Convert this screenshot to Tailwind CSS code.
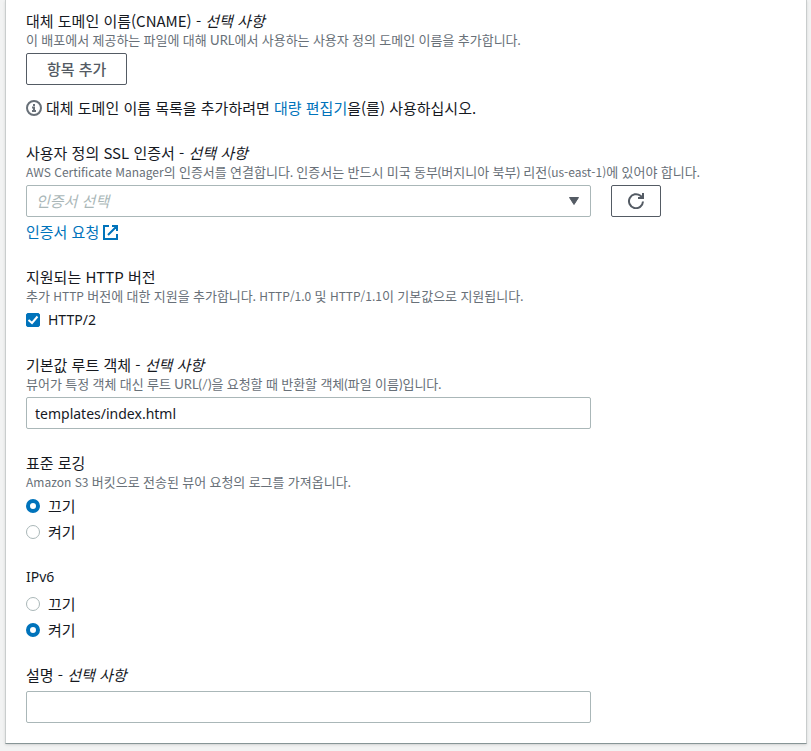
<!DOCTYPE html>
<html lang="ko">
<head>
  <meta charset="UTF-8" />
  <meta name="viewport" content="width=device-width, initial-scale=1.0" />
  <title>배포 설정</title>
  <script src="https://cdn.jsdelivr.net/npm/@tailwindcss/browser@4"></script>
</head>
<body class="bg-[#f2f3f3] text-[#16191f] font-['Noto_Sans_CJK_KR',sans-serif] text-[15px] leading-[22px]">
  <main class="ml-[5px] mr-1 mb-[7px] bg-white border-x border-b border-x-[#c9cdcd] border-b-[#879596] shadow-sm px-5 pt-[10px] pb-5">
    <form class="flex flex-col gap-[23px]">

      <!-- 대체 도메인 이름 -->
      <section>
        <h3>대체 도메인 이름(CNAME) - <i>선택 사항</i></h3>
        <p class="font-['Lato','Noto_Sans_CJK_KR',sans-serif] text-[13px] leading-4 text-[#687078]">이 배포에서 제공하는 파일에 대해 URL에서 사용하는 사용자 정의 도메인 이름을 추가합니다.</p>
        <button type="button" class="mt-[5px] h-8 px-5 border border-[#545b64] rounded-xs font-medium text-[#545b64] bg-white">항목 추가</button>
        <p class="mt-3 flex items-center gap-1">
          <svg class="size-4 shrink-0" viewBox="0 0 16 16" fill="none" stroke="#687078" stroke-width="2">
            <circle cx="8" cy="8" r="7" />
            <path d="M7 5h2M6 7.500h2V11M6 11h4" />
          </svg>
          <span>대체 도메인 이름 목록을 추가하려면 <a href="#" class="text-[#0073bb]">대량 편집기</a>을(를) 사용하십시오.</span>
        </p>
      </section>

      <!-- SSL 인증서 -->
      <section>
        <label for="cert" class="block">사용자 정의 SSL 인증서 - <i>선택 사항</i></label>
        <p class="font-['Lato','Noto_Sans_CJK_KR',sans-serif] text-[13px] leading-4 text-[#687078]"><span class="font-['Noto_Sans_CJK_KR',sans-serif] text-xs leading-4">AWS Certificate Manager</span>의 인증서를 연결합니다. 인증서는 반드시 미국 동부(버지니아 북부) 리전<span class="font-['Noto_Sans_CJK_KR',sans-serif] text-xs leading-4">(us-east-1)</span>에 있어야 합니다.</p>
        <div class="mt-[5px] grid grid-cols-4 gap-5">
          <div class="relative col-span-3">
            <select id="cert" class="block w-full h-8 px-[9px] appearance-none border border-[#aab7b8] rounded-xs bg-white italic text-[#aab7b8]">
              <option>인증서 선택</option>
            </select>
            <svg class="absolute right-3 top-3 w-[10px] h-2 pointer-events-none" viewBox="0 0 10 8" fill="#545b64" stroke="#545b64" stroke-linejoin="round">
              <path d="M.5 .5h9L5 7.5z" />
            </svg>
          </div>
          <button type="button" aria-label="새로 고침" class="w-[50px] h-8 flex items-center justify-center border border-[#545b64] rounded-xs bg-white">
            <svg class="size-4" viewBox="0 0 16 16" fill="none" stroke="#545b64" stroke-width="2">
              <path d="M15 8.5A7 7 0 1 1 12.5 2.8L15 5" />
              <path d="M15 0v5h-5" />
            </svg>
          </button>
        </div>
        <a href="#" class="mt-1 flex w-fit items-center gap-1 text-[#0073bb]">
          인증서 요청
          <svg class="size-[15px]" viewBox="0 0 15 15" fill="none" stroke="#0073bb" stroke-width="2">
            <path d="M6 1H1v13h13V9M9 1h5v5M14 1L5 10" />
          </svg>
        </a>
      </section>

      <!-- HTTP 버전 -->
      <fieldset>
        <legend>지원되는 HTTP 버전</legend>
        <p class="font-['Lato','Noto_Sans_CJK_KR',sans-serif] text-[13px] leading-4 text-[#687078]">추가 <span class="font-['Noto_Sans_CJK_KR',sans-serif] text-xs leading-4">HTTP</span> 버전에 대한 지원을 추가합니다. <span class="font-['Noto_Sans_CJK_KR',sans-serif] text-xs leading-4">HTTP/1.0</span> 및 <span class="font-['Noto_Sans_CJK_KR',sans-serif] text-xs leading-4">HTTP/1.1</span>이 기본값으로 지원됩니다.</p>
        <label class="mt-[5px] flex w-fit items-center gap-2 font-['Noto_Sans',sans-serif] text-sm leading-[22px]">
          <span class="grid">
            <input type="checkbox" checked class="peer col-start-1 row-start-1 size-[14px] appearance-none border border-[#aab7b8] rounded-xs checked:bg-[#0073bb] checked:border-[#0073bb]" />
            <svg class="col-start-1 row-start-1 size-[14px] pointer-events-none invisible peer-checked:visible" viewBox="0 0 14 14" fill="none" stroke="#fff" stroke-width="2">
              <path d="M2.500 7l3.500 3L11.500 3.500" />
            </svg>
          </span>
          HTTP/2
        </label>
      </fieldset>

      <!-- 루트 객체 -->
      <section>
        <label for="root" class="block">기본값 루트 객체 - <i>선택 사항</i></label>
        <p class="font-['Lato','Noto_Sans_CJK_KR',sans-serif] text-[13px] leading-4 text-[#687078]">뷰어가 특정 객체 대신 루트 URL(/)을 요청할 때 반환할 객체(파일 이름)입니다.</p>
        <div class="mt-[5px] grid grid-cols-4 gap-5">
          <input id="root" type="text" value="templates/index.html" class="col-span-3 h-8 px-2 border border-[#aab7b8] rounded-xs bg-white font-['Noto_Sans',sans-serif] text-sm" />
        </div>
      </section>

      <!-- 로깅 -->
      <fieldset>
        <legend>표준 로깅</legend>
        <p class="font-['Lato','Noto_Sans_CJK_KR',sans-serif] text-[13px] leading-4 text-[#687078]"><span class="font-['Noto_Sans_CJK_KR',sans-serif] text-xs leading-4">Amazon S3</span> 버킷으로 전송된 뷰어 요청의 로그를 가져옵니다.</p>
        <div class="mt-[5px] flex flex-col gap-1">
          <label class="flex w-fit items-center gap-2">
            <input type="radio" name="logging" checked class="size-[14px] appearance-none rounded-full border border-[#aab7b8] bg-white checked:border-4 checked:border-[#0073bb]" />
            끄기
          </label>
          <label class="flex w-fit items-center gap-2">
            <input type="radio" name="logging" class="size-[14px] appearance-none rounded-full border border-[#aab7b8] bg-white checked:border-4 checked:border-[#0073bb]" />
            켜기
          </label>
        </div>
      </fieldset>

      <!-- IPv6 -->
      <fieldset>
        <legend class="font-['Noto_Sans',sans-serif] text-sm leading-[22px]">IPv6</legend>
        <div class="mt-[5px] flex flex-col gap-1">
          <label class="flex w-fit items-center gap-2">
            <input type="radio" name="ipv6" class="size-[14px] appearance-none rounded-full border border-[#aab7b8] bg-white checked:border-4 checked:border-[#0073bb]" />
            끄기
          </label>
          <label class="flex w-fit items-center gap-2">
            <input type="radio" name="ipv6" checked class="size-[14px] appearance-none rounded-full border border-[#aab7b8] bg-white checked:border-4 checked:border-[#0073bb]" />
            켜기
          </label>
        </div>
      </fieldset>

      <!-- 설명 -->
      <section>
        <label for="desc" class="block">설명 - <i>선택 사항</i></label>
        <div class="mt-[5px] grid grid-cols-4 gap-5">
          <input id="desc" type="text" class="col-span-3 h-8 px-2 border border-[#aab7b8] rounded-xs bg-white" />
        </div>
      </section>

    </form>
  </main>
</body>
</html>
